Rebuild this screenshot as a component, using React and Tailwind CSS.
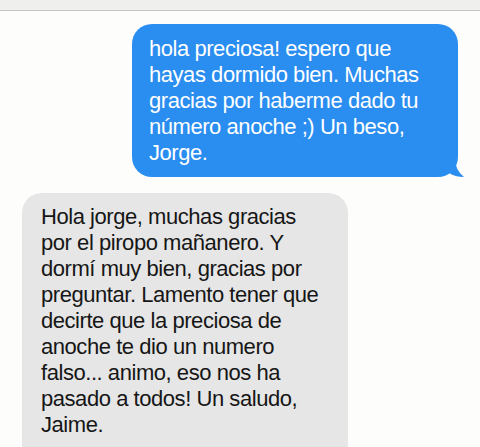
export default function App() {
  return (
    <div
      className="w-[480px] h-[447px] overflow-hidden bg-[#fdfdfb]"
      style={{ fontFamily: '"Liberation Sans", Arial, sans-serif' }}
    >
      <div className="h-[11px] bg-[#efefed] border-b border-[#c6c6c6]" />

      <div className="flex flex-col">
        <div className="relative ml-[132px] mt-[13px] w-[326px] h-[153px] rounded-[20px] bg-[#2a8df0] pl-[17px] pt-[12px] text-[22px] leading-[26px] tracking-[-0.45px] text-white">
          <p className="whitespace-nowrap">
            hola preciosa! espero que<br />
            hayas dormido bien. Muchas<br />
            gracias por haberme dado tu<br />
            número anoche ;) Un beso,<br />
            Jorge.
          </p>
          <svg
            className="absolute right-[-7px] bottom-[-1px]"
            width="22"
            height="20"
            viewBox="0 0 22 20"
          >
            <path d="M0 0 L12 0 Q12 12 21 19 Q12 19 6 15 Q3 17 0 18 Z" fill="#2a8df0" />
          </svg>
        </div>

        <div className="ml-[22px] mt-[16px] w-[326px] h-[270px] rounded-[20px] bg-[#e6e6e6] pl-[19px] pt-[11px] text-[22px] leading-[26px] tracking-[-0.45px] text-[#161616]">
          <p className="whitespace-nowrap">
            Hola jorge, muchas gracias<br />
            por el piropo mañanero. Y<br />
            dormí muy bien, gracias por<br />
            preguntar. Lamento tener que<br />
            decirte que la preciosa de<br />
            anoche te dio un numero<br />
            falso... animo, eso nos ha<br />
            pasado a todos! Un saludo,<br />
            Jaime.
          </p>
        </div>
      </div>
    </div>
  );
}
